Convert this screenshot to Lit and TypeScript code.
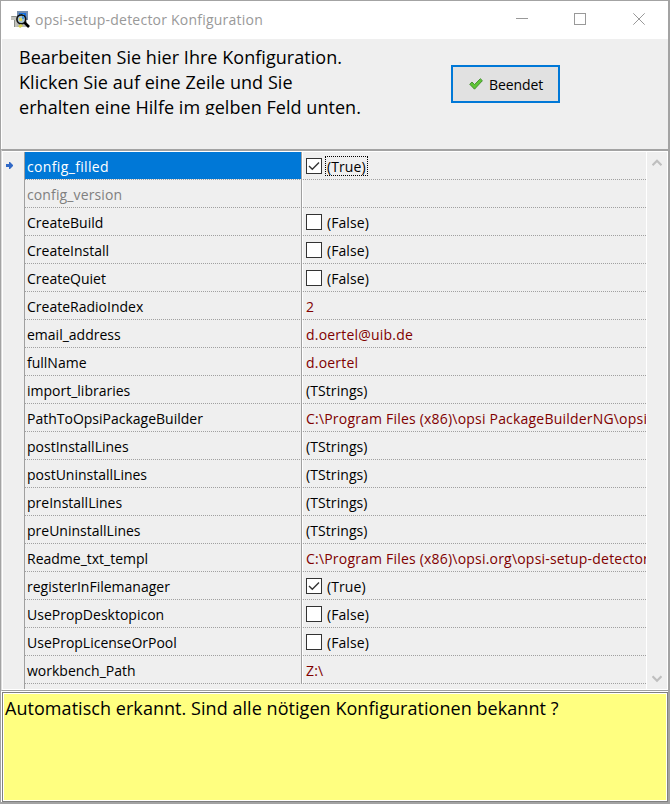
import { LitElement, html, css, svg, nothing } from "lit";
import { customElement } from "lit/decorators.js";
import { classMap } from "lit/directives/class-map.js";

interface Row {
  name: string;
  value: string;
  kind?: "bool" | "list" | "text";
  checked?: boolean;
  selected?: boolean;
  disabled?: boolean;
}

const rows: Row[] = [
  { name: "config_filled", value: "(True)", kind: "bool", checked: true, selected: true },
  { name: "config_version", value: "", disabled: true },
  { name: "CreateBuild", value: "(False)", kind: "bool" },
  { name: "CreateInstall", value: "(False)", kind: "bool" },
  { name: "CreateQuiet", value: "(False)", kind: "bool" },
  { name: "CreateRadioIndex", value: "2", kind: "text" },
  { name: "email_address", value: "d.oertel@uib.de", kind: "text" },
  { name: "fullName", value: "d.oertel", kind: "text" },
  { name: "import_libraries", value: "(TStrings)", kind: "list" },
  { name: "PathToOpsiPackageBuilder", value: "C:\\Program Files (x86)\\opsi PackageBuilderNG\\opsi", kind: "text" },
  { name: "postInstallLines", value: "(TStrings)", kind: "list" },
  { name: "postUninstallLines", value: "(TStrings)", kind: "list" },
  { name: "preInstallLines", value: "(TStrings)", kind: "list" },
  { name: "preUninstallLines", value: "(TStrings)", kind: "list" },
  { name: "Readme_txt_templ", value: "C:\\Program Files (x86)\\opsi.org\\opsi-setup-detector", kind: "text" },
  { name: "registerInFilemanager", value: "(True)", kind: "bool", checked: true },
  { name: "UsePropDesktopicon", value: "(False)", kind: "bool" },
  { name: "UsePropLicenseOrPool", value: "(False)", kind: "bool" },
  { name: "workbench_Path", value: "Z:\\", kind: "text" },
];

@customElement("app-root")
export class AppRoot extends LitElement {
  static styles = css`
    :host {
      display: flex;
      flex-direction: column;
      box-sizing: border-box;
      width: 670px;
      height: 804px;
      overflow: hidden;
      background: #efefef;
      border: 1px solid #a3a3a3;
      border-right-width: 2px;
      border-bottom-width: 2px;
      font: 14px/20px "Open Sans", "Noto Sans", sans-serif;
      color: #000;
      white-space: pre;
    }
    svg { display: block; flex: none; }
    .title { display: flex; height: 38px; background: #fff; align-items: center; color: #999; flex: none; }
    .logo { margin: 0 5px 0 9px; }
    .caption { flex: 1; letter-spacing: 0.22px; }
    .win { margin: 0 23px 2px 0; }
    .head { display: flex; height: 110px; flex: none; border-left: 1px solid #fff; box-sizing: border-box; }
    .intro { width: 432px; height: 70px; padding-top: 1px; margin: 5px 0 0 17px; font-size: 18px; line-height: 25px; overflow: hidden; letter-spacing: 0.045px; }
    .button {
      display: flex; align-items: center; gap: 6px; box-sizing: border-box;
      width: 109px; height: 38px; margin-top: 26px; padding-left: 16px;
      background: #e1e1e1; border: 2px solid #0078d7;
    }
    .button span { padding-top: 1px; letter-spacing: -0.1px; }
    .grid { display: flex; height: 542px; flex: none; border-top: 2px solid #a3a3a3; border-bottom: 1px solid #a0a0a0; border-left: 1px solid #dcdcdc; box-sizing: border-box; }
    .inner { display: flex; flex: 1; border: 1px solid #fff; }
    .gutter { width: 21px; border-right: 1px solid #a0a0a0; padding: 10px 0 0 3px; box-sizing: border-box; flex: none; width: 22px; }
    .rows { width: 621px; overflow: hidden; flex: none; }
    .row { display: flex; height: 28px; box-sizing: border-box; border-bottom: 1px dotted #a0a0a0; }
    .name { width: 277px; box-sizing: border-box; padding: 5px 0 0 2px; border-right: 1px solid #a0a0a0; flex: none; }
    .selected .name { background: #0078d7; color: #fff; letter-spacing: 0.35px; }
    .disabled .name { color: #808080; letter-spacing: 0.12px; }
    .value { display: flex; flex: 1; min-width: 0; border-left: 1px solid #fff; padding: 5px 0 0 3px; overflow: hidden; letter-spacing: 0.08px; }
    .box { margin: 1px 5px 0 0; }
    .text { color: #800000; letter-spacing: 0.2px; }
    .selected .value { padding-top: 4px; }
    .selected .box { margin: 2px 3px 0 0; }
    .selected .value span { height: 18px; line-height: 20px; padding: 0 1px; border: 1px dotted #000; }
    .scroll { flex: 1; border-left: 1px solid #fff; display: flex; flex-direction: column; justify-content: space-between; padding: 7px 0 6px 5px; }
    .help { flex: 1; margin: 1px 0 0 1px; border: 1px solid #808080; box-shadow: inset 0 0 0 1px #fff, 0 0 0 1px #fff; background: #ffff80; padding: 3px 2px; font-size: 18px; line-height: 25px; letter-spacing: 0.05px; }
  `;

  private logo() {
    return html`<svg class="logo" width="20" height="18" viewBox="0 0 20 18">
      <path d="M1 5h7v11H4V9H1z" fill="#c3c3bd" />
      <path d="M1.5 5.5h5M4.5 9v7" stroke="#8b9089" />
      <path d="M7 0h11v9H7z" fill="#758fae" />
      <path d="M9 2h7v5H9z" fill="#176de0" />
      <path d="M10 3h4v2h-4z" fill="#6edff5" />
      <path d="M7 10h10v6H7z" fill="#b8bab6" />
      <circle cx="11.3" cy="8.3" r="4.4" fill="#a9c4cf" stroke="#111" stroke-width="1.6" />
      <path d="M9 7h3v3H9z" fill="#ded65c" />
      <path d="M12 5h2v3h-2z" fill="#4a99d9" />
      <path d="M14.5 11.5L19 16" stroke="#000" stroke-width="2.6" />
      <path d="M8 15l3-2 2 2-3 2z" fill="#d9d34f" />
    </svg>`;
  }

  private winButtons() {
    return html`<svg class="win" width="129" height="12" viewBox="0 0 129 12" fill="none" stroke="#999">
      <path d="M0 5.5h12" />
      <rect x="58.5" y=".5" width="11" height="11" />
      <path d="M117.3.3l11.4 11.4M128.7.3l-11.4 11.4" />
    </svg>`;
  }

  private check() {
    return html`<svg width="14" height="12" viewBox="0 0 14 12">
      <path d="M.7 6.2L3 4l2.5 2.6L11.3.7l2.1 2-7.9 8.5z" fill="#5fc536" stroke="#3f8a2b" stroke-width=".9" />
    </svg>`;
  }

  private arrow() {
    return html`<svg width="7" height="7" viewBox="0 0 7 7">
      <path d="M0 2h3V0h1l3 3v1L4 7H3V5H0z" fill="#3169c6" />
    </svg>`;
  }

  private chevron(up: boolean) {
    return html`<svg width="10" height="8" viewBox="0 0 10 8">
      <path d=${up ? "M.5 6.2L5 1.7l4.5 4.5" : "M.5 1.3L5 5.8l4.5-4.5"} fill="none" stroke="#bfbfbf" stroke-width="2.2" />
    </svg>`;
  }

  private box(on?: boolean) {
    return html`<svg class="box" width="16" height="16" viewBox="0 0 16 16">
      <rect x=".5" y=".5" width="15" height="15" fill="#fff" stroke="#333" />
      ${on ? svg`<path d="M3 8l3.3 3.3L13 4.5" fill="none" stroke="#333" stroke-width="1.4"/>` : nothing}
    </svg>`;
  }

  render() {
    return html`<div class="title">${this.logo()}<span class="caption">opsi-setup-detector Konfiguration</span>${this.winButtons()}</div><div class="head"><div class="intro">Bearbeiten Sie hier Ihre Konfiguration.
Klicken Sie auf eine Zeile und Sie
erhalten eine Hilfe im gelben Feld unten.</div><div class="button">${this.check()}<span>Beendet</span></div></div><div class="grid"><div class="inner"><div class="gutter">${this.arrow()}</div><div class="rows">${rows.map(
      (r) => html`<div class=${classMap({ row: true, selected: !!r.selected, disabled: !!r.disabled })}><div class="name"><span>${r.name}</span></div><div class=${classMap({ value: true, text: r.kind === "text" })}>${r.kind === "bool" ? this.box(r.checked) : nothing}<span>${r.value}</span></div></div>`
    )}</div><div class="scroll">${this.chevron(true)}${this.chevron(false)}</div></div></div><div class="help">Automatisch erkannt. Sind alle nötigen Konfigurationen bekannt ?</div>`;
  }
}
